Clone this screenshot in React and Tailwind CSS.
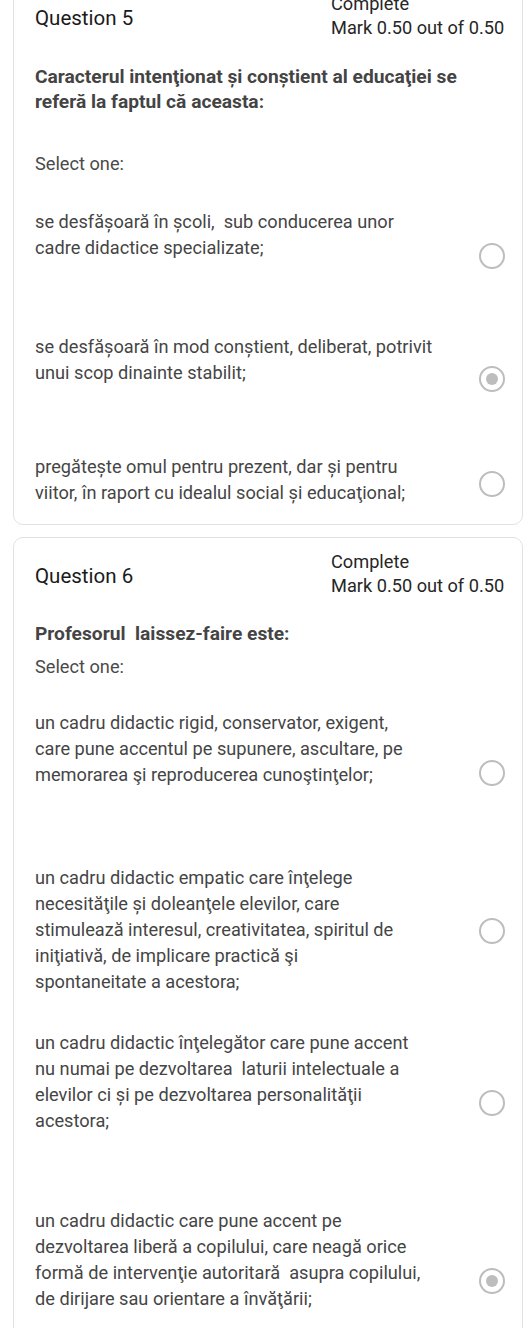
import React from "react";

function Radio({ checked, mt }) {
  return (
    <div className={`shrink-0 mr-[17px] ${mt}`}>
      <div className="w-[26px] h-[26px] rounded-full border-2 border-[#bdbdbd] flex items-center justify-center bg-white">
        {checked && <div className="w-[12px] h-[12px] rounded-full bg-[#bdbdbd]" />}
      </div>
    </div>
  );
}

function Option({ text, checked, rowMt, radioMt }) {
  return (
    <div className={`flex items-start ${rowMt}`}>
      <div className="flex-1 min-w-0 text-[18.2px] leading-[26px] text-[#454545]">
        {text.map((l, i) => (
          <div key={i} className="whitespace-pre">{l}</div>
        ))}
      </div>
      <Radio checked={checked} mt={radioMt} />
    </div>
  );
}

function Header({ n }) {
  return (
    <div className="flex items-center">
      <div className="text-[20.5px] leading-[24px] text-[#1a1a1a] mt-[3px]">Question {n}</div>
      <div className="ml-auto mr-[13px] w-[178px] text-[18.2px] leading-[24px] text-[#262626]">
        <div>Complete</div>
        <div>Mark 0.50 out of 0.50</div>
      </div>
    </div>
  );
}

export default function App() {
  return (
    <div
      className="w-[532px] h-[1328px] overflow-hidden bg-white"
      style={{ fontFamily: "Roboto, 'Noto Sans', sans-serif" }}
    >
      {/* Card 1 */}
      <div className="ml-[13px] mr-[9px] -mt-[20px] border border-[#e2e2e2] rounded-[10px] pl-[21px] pt-[11px] pb-[18px]">
        <Header n={5} />
        <div className="mt-[24px] text-[19.2px] leading-[25px] font-bold text-[#444444]">
          <div>Caracterul intenţionat și conștient al educaţiei se</div>
          <div>referă la faptul că aceasta:</div>
        </div>
        <div className="mt-[37px] text-[18.2px] leading-[26px] text-[#4a4a4a]">Select one:</div>
        <Option
          rowMt="mt-[32px]"
          radioMt="mt-[34px]"
          text={["se desfășoară în școli,  sub conducerea unor", "cadre didactice specializate;"]}
        />
        <Option
          rowMt="mt-[65px]"
          radioMt="mt-[32px]"
          checked
          text={["se desfășoară în mod conștient, deliberat, potrivit", "unui scop dinainte stabilit;"]}
        />
        <Option
          rowMt="mt-[62px]"
          radioMt="mt-[17px]"
          text={["pregătește omul pentru prezent, dar și pentru", "viitor, în raport cu idealul social și educaţional;"]}
        />
      </div>

      {/* Card 2 */}
      <div className="ml-[13px] mr-[9px] mt-[12px] border border-[#e2e2e2] rounded-[10px] pl-[21px] pt-[12px] pb-[40px]">
        <Header n={6} />
        <div className="mt-[23px] text-[19.2px] leading-[25px] font-bold text-[#444444]">
          <div className="whitespace-pre">Profesorul  laissez-faire este:</div>
        </div>
        <div className="mt-[8px] text-[18.2px] leading-[26px] text-[#4a4a4a]">Select one:</div>
        <Option
          rowMt="mt-[30px]"
          radioMt="mt-[50px]"
          text={[
            "un cadru didactic rigid, conservator, exigent,",
            "care pune accentul pe supunere, ascultare, pe",
            "memorarea şi reproducerea cunoştinţelor;",
          ]}
        />
        <Option
          rowMt="mt-[77px]"
          radioMt="mt-[53px]"
          text={[
            "un cadru didactic empatic care înţelege",
            "necesităţile și doleanţele elevilor, care",
            "stimulează interesul, creativitatea, spiritul de",
            "iniţiativă, de implicare practică şi",
            "spontaneitate a acestora;",
          ]}
        />
        <Option
          rowMt="mt-[35px]"
          radioMt="mt-[60px]"
          text={[
            "un cadru didactic înţelegător care pune accent",
            "nu numai pe dezvoltarea  laturii intelectuale a",
            "elevilor ci și pe dezvoltarea personalităţii",
            "acestora;",
          ]}
        />
        <Option
          rowMt="mt-[74px]"
          radioMt="mt-[60px]"
          checked
          text={[
            "un cadru didactic care pune accent pe",
            "dezvoltarea liberă a copilului, care neagă orice",
            "formă de intervenţie autoritară  asupra copilului,",
            "de dirijare sau orientare a învăţării;",
          ]}
        />
      </div>
    </div>
  );
}
